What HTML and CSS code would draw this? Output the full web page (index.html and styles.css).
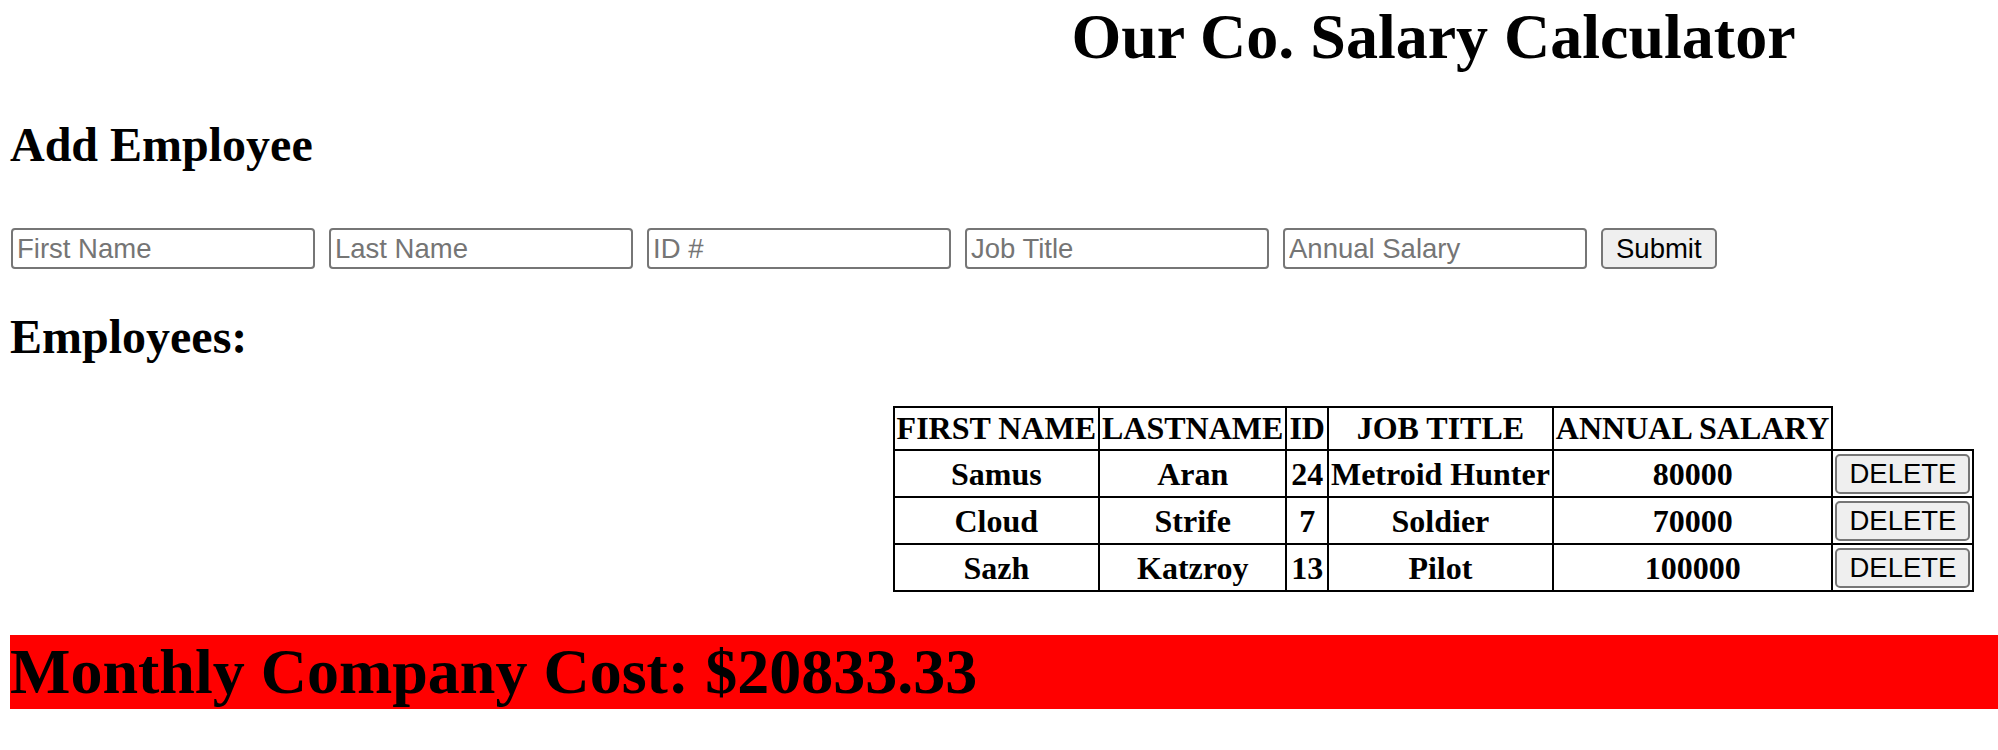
FILE: index.html
```html
<!DOCTYPE html>
<html lang="en">
<head>
<meta charset="utf-8">
<title>Our Co. Salary Calculator</title>
<link rel="stylesheet" href="styles.css">
</head>
<body>
<div class="page">
  <h1 class="title">Our Co. Salary Calculator</h1>
  <h2 class="section">Add Employee</h2>
  <form class="add-form">
    <input class="field" type="text" placeholder="First Name">
    <input class="field" type="text" placeholder="Last Name">
    <input class="field" type="text" placeholder="ID #">
    <input class="field" type="text" placeholder="Job Title">
    <input class="field" type="text" placeholder="Annual Salary">
    <button class="btn" type="button">Submit</button>
  </form>
  <h2 class="section">Employees:</h2>
  <table class="emp">
    <thead>
      <tr><th>FIRST NAME</th><th>LASTNAME</th><th>ID</th><th>JOB TITLE</th><th>ANNUAL SALARY</th></tr>
    </thead>
    <tbody>
      <tr><td>Samus</td><td>Aran</td><td>24</td><td>Metroid Hunter</td><td>80000</td><td><button class="btn del" type="button">DELETE</button></td></tr>
      <tr><td>Cloud</td><td>Strife</td><td>7</td><td>Soldier</td><td>70000</td><td><button class="btn del" type="button">DELETE</button></td></tr>
      <tr><td>Sazh</td><td>Katzroy</td><td>13</td><td>Pilot</td><td>100000</td><td><button class="btn del" type="button">DELETE</button></td></tr>
    </tbody>
  </table>
  <h1 class="total">Monthly Company Cost: $20833.33</h1>
</div>
</body>
</html>
```

FILE: styles.css
```css
html {
  overflow-x: hidden;
}

body {
  margin: 0;
  padding: 0 10px;
  font-family: "Liberation Serif", "Times New Roman", serif;
  color: #000;
  background: #fff;
}

.page {
  width: 2847px;
}

.title {
  font-size: 64px;
  font-weight: bold;
  text-align: center;
  margin: 0 0 43px;
}

.section {
  font-size: 48px;
  font-weight: bold;
  margin: 40px 0;
}

.add-form {
  display: flex;
  gap: 14px;
  margin: 56px 0 0;
  padding-left: 1px;
}

.field {
  box-sizing: border-box;
  width: 304px;
  height: 41px;
  margin: 0;
  padding: 2px 4px;
  border: 2px solid #767676;
  border-radius: 4px;
  font-family: "Liberation Sans", Arial, sans-serif;
  font-size: 27.5px;
  color: #000;
  background: #fff;
}

.field::placeholder {
  color: #757575;
}

.btn {
  box-sizing: border-box;
  height: 41px;
  margin: 0;
  padding: 0 13px;
  border: 2px solid #767676;
  border-radius: 5px;
  background: #efefef;
  color: #000;
  font-family: "Liberation Sans", Arial, sans-serif;
  font-size: 27.5px;
}

.btn.del {
  height: 40px;
  padding: 0 12px;
}

.emp {
  border-collapse: collapse;
  margin: 42px auto 0;
  font-size: 32px;
  font-weight: bold;
}

.emp th,
.emp td {
  border: 2px solid #000;
  padding: 2px;
  text-align: center;
}

.emp td {
  padding: 3px 2px 2px;
}

.total {
  font-size: 64px;
  font-weight: bold;
  background: #ff0000;
  margin: 43px 0;
}
```
